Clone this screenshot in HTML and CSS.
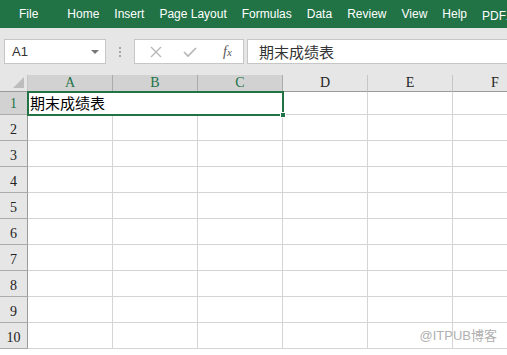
FILE: index.html
```html
<!DOCTYPE html>
<html lang="zh-CN">
<head>
    <meta charset="UTF-8">
    <title>期末成绩表 - Excel</title>
    <link rel="stylesheet" href="styles.css">
</head>
<body>
    <div class="ribbon-tabs">
        <span class="tab tab-file">File</span>
        <span class="tab">Home</span>
        <span class="tab">Insert</span>
        <span class="tab">Page Layout</span>
        <span class="tab">Formulas</span>
        <span class="tab">Data</span>
        <span class="tab">Review</span>
        <span class="tab">View</span>
        <span class="tab">Help</span>
        <span class="tab">PDF工具</span>
    </div>

    <!-- Formula bar -->
    <div class="formula-bar">
        <div class="name-box">
            <span>A1</span>
            <span class="caret"></span>
        </div>
        <div class="grip"></div>
        <div class="fx-buttons">
            <svg width="12" height="12" viewBox="0 0 12 12"><path d="M1 1 L11 11 M11 1 L1 11" stroke="#b5b5b5" stroke-width="1.3" fill="none"/></svg>
            <svg width="14" height="12" viewBox="0 0 14 12"><path d="M1 6 L5 10 L13 2" stroke="#b5b5b5" stroke-width="1.6" fill="none"/></svg>
            <span class="fx">f<i>x</i></span>
        </div>
        <div class="formula-input">期末成绩表</div>
    </div>

    <!-- Sheet grid -->
    <div class="sheet">
        <div class="corner"><span class="corner-tri"></span></div>
        <div class="col-head active">A</div>
        <div class="col-head active">B</div>
        <div class="col-head active">C</div>
        <div class="col-head">D</div>
        <div class="col-head">E</div>
        <div class="col-head">F</div>

        <div class="row-head active">1</div>
        <div class="cell merged selected">期末成绩表<span class="fill-handle"></span></div>
        <div class="cell"></div>
        <div class="cell"></div>
        <div class="cell"></div>
    </div>

    <div class="watermark">@ITPUB博客</div>

    <script>
        // rows 2-10 are empty, build them instead of typing them out
        const sheet = document.querySelector('.sheet');
        for (let r = 2; r <= 10; r++) {
            const head = document.createElement('div');
            head.className = 'row-head';
            head.textContent = r;
            sheet.appendChild(head);
            for (let c = 0; c < 6; c++) {
                const cell = document.createElement('div');
                cell.className = 'cell';
                sheet.appendChild(cell);
            }
        }
    </script>
</body>
</html>
```

FILE: styles.css
```css
/* Base */
* {
    margin: 0;
    padding: 0;
    box-sizing: border-box;
}

body {
    font-family: 'Liberation Sans', Arial, sans-serif;
    background-color: #ffffff;
    width: 507px;
    height: 355px;
    overflow: hidden;
    position: relative;
}

/* Ribbon tabs */
.ribbon-tabs {
    height: 28px;
    background-color: #217346;
    display: flex;
    align-items: center;
    padding-left: 19px;
    gap: 15px;
    white-space: nowrap;
    overflow: hidden;
}

.tab {
    color: #ffffff;
    font-size: 12px;
    flex-shrink: 0;
}

.tab-file {
    margin-right: 14px;
}

/* Formula bar */
.formula-bar {
    height: 47px;
    background-color: #e6e6e6;
    display: flex;
    align-items: flex-start;
    padding: 11px 0 0 4px;
}

.name-box {
    width: 102px;
    height: 25px;
    background-color: #fff;
    border: 1px solid #c6c6c6;
    display: flex;
    align-items: center;
    justify-content: space-between;
    padding: 0 6px 0 7px;
    font-size: 13px;
    color: #333;
}

.caret {
    width: 0;
    height: 0;
    border-left: 4px solid transparent;
    border-right: 4px solid transparent;
    border-top: 4px solid #777;
}

.grip {
    width: 2px;
    height: 11px;
    margin: 7px 13px 0 13px;
    background-image: radial-gradient(circle, #a5a5a5 1px, transparent 1px);
    background-size: 2px 4px;
}

.fx-buttons {
    width: 110px;
    height: 25px;
    background-color: #fff;
    border: 1px solid #c6c6c6;
    display: flex;
    align-items: center;
    padding-left: 15px;
    gap: 21px;
}

.fx {
    font-family: 'Liberation Serif', serif;
    font-style: italic;
    font-size: 14px;
    color: #555;
    margin-left: 5px;
}

.fx i {
    font-size: 11px;
}

.formula-input {
    flex: 1;
    height: 25px;
    margin-left: 3px;
    background-color: #fff;
    border: 1px solid #c6c6c6;
    border-right: none;
    padding-left: 11px;
    font-family: 'Noto Sans CJK SC', sans-serif;
    font-size: 15px;
    line-height: 23px;
    color: #333;
}

/* Sheet */
.sheet {
    display: grid;
    grid-template-columns: 28px repeat(6, 85px);
    grid-template-rows: 17px 23px repeat(9, 26px);
    font-family: 'Liberation Serif', serif;
}

.corner {
    background-color: #e6e6e6;
    border-right: 1px solid #c6c6c6;
    border-bottom: 1px solid #9b9b9b;
    position: relative;
}

.corner-tri {
    position: absolute;
    right: 3px;
    bottom: 3px;
    width: 0;
    height: 0;
    border-left: 11px solid transparent;
    border-bottom: 11px solid #bdbdbd;
}

.col-head {
    background-color: #e6e6e6;
    border-right: 1px solid #c6c6c6;
    border-bottom: 1px solid #9b9b9b;
    font-size: 14px;
    line-height: 16px;
    text-align: center;
    color: #222;
}

.col-head.active {
    background-color: #d2d2d2;
    color: #217346;
    border-right-color: #ababab;
}

.row-head {
    background-color: #e6e6e6;
    border-right: 1px solid #9b9b9b;
    border-bottom: 1px solid #ababab;
    font-size: 14px;
    text-align: center;
    color: #222;
    display: flex;
    align-items: flex-end;
    justify-content: center;
    padding-bottom: 2px;
}

.row-head.active {
    background-color: #d2d2d2;
    color: #217346;
}

.cell {
    border-right: 1px solid #d4d4d4;
    border-bottom: 1px solid #d4d4d4;
}

.merged {
    grid-column: span 3;
    font-family: 'Noto Sans CJK SC', sans-serif;
    font-size: 15px;
    line-height: 22px;
    padding-left: 2px;
    color: #000;
}

.selected {
    position: relative;
    outline: 2px solid #217346;
    outline-offset: -1px;
    z-index: 1;
}

.fill-handle {
    position: absolute;
    right: -4px;
    bottom: -4px;
    width: 6px;
    height: 6px;
    background-color: #217346;
    border: 1px solid #fff;
}

.watermark {
    position: absolute;
    right: 10px;
    bottom: 11px;
    font-family: 'Liberation Sans', 'Noto Sans CJK SC', sans-serif;
    font-size: 13px;
    color: #b0b0b0;
}
```
